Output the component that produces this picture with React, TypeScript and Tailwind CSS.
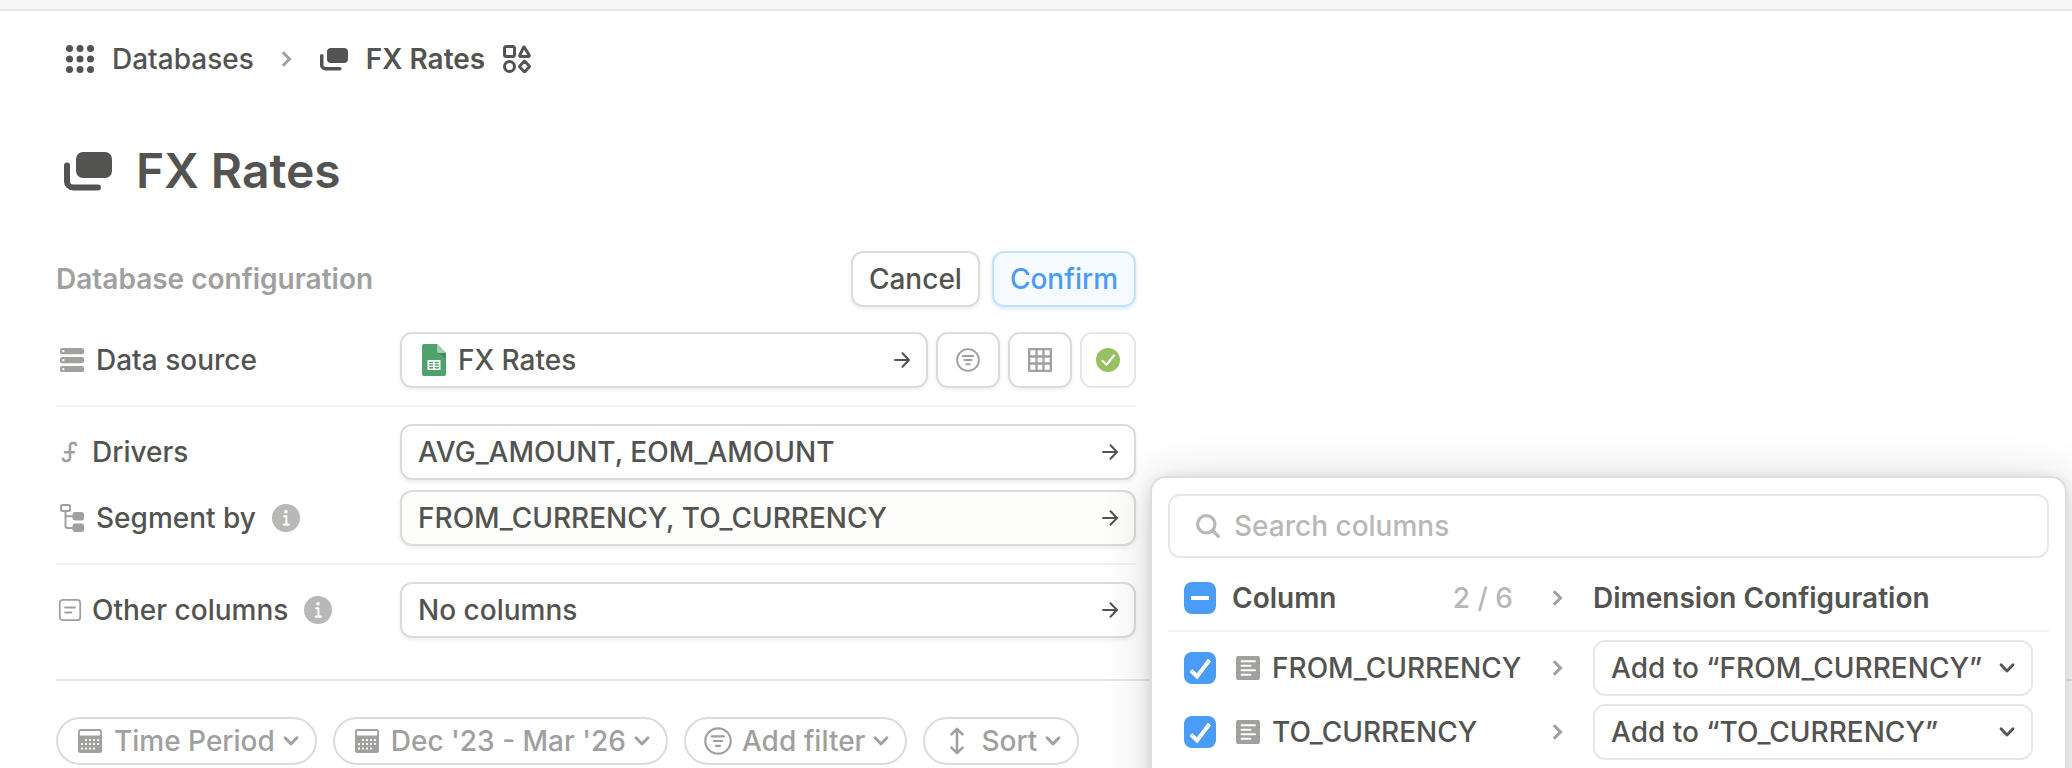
import type { ReactNode } from "react";

const stroke = {
  fill: "none",
  stroke: "currentColor",
  strokeLinecap: "round" as const,
  strokeLinejoin: "round" as const,
};

function DotsIcon() {
  const at = [3.5, 14, 24.5];
  return (
    <svg className="size-7 shrink-0" viewBox="0 0 28 28" fill="currentColor" aria-hidden="true">
      {at.map((y) => at.map((x) => <circle key={`${x}-${y}`} cx={x} cy={y} r="3.5" />))}
    </svg>
  );
}

function DatabaseIcon({ className }: { className: string }) {
  return (
    <svg className={className} viewBox="0 0 48 40" aria-hidden="true">
      <rect x="12" y="1" width="36" height="26" rx="7" fill="currentColor" />
      <path d="M3 14.500V30.500A6 6 0 0 0 9 36.500H34" {...stroke} strokeWidth="6" />
    </svg>
  );
}

function ShapesIcon() {
  return (
    <svg className="size-7 shrink-0" viewBox="0 0 28 28" {...stroke} strokeWidth="3" aria-hidden="true">
      <rect x="1.500" y="1.500" width="10" height="10" rx="2" />
      <path d="M21.300 2.200 26 9.700Q27 11.500 25 11.500H18Q16 11.500 17 9.700L20.700 2.200Q21 1.600 21.300 2.200Z" />
      <circle cx="6.500" cy="21.500" r="5" />
      <path d="M20.700 16.800Q21.500 16 22.300 16.800L26 20.700Q26.800 21.500 26 22.300L22.300 26.200Q21.500 27 20.700 26.200L17 22.300Q16.200 21.500 17 20.700Z" />
    </svg>
  );
}

function ChevronRight() {
  return (
    <svg className="h-4 w-3 shrink-0 text-[#a0a09e]" viewBox="0 0 12 16" {...stroke} strokeWidth="3" strokeLinecap="butt" strokeLinejoin="miter" aria-hidden="true">
      <path d="M1.800 1.300 8.500 8 1.800 14.700" />
    </svg>
  );
}

function ChevronDown() {
  return (
    <svg className="h-3 w-4 shrink-0" viewBox="0 0 16 12" {...stroke} strokeWidth="2.800" aria-hidden="true">
      <path d="M2 2.800 8 9 14 2.800" />
    </svg>
  );
}

function ArrowRight() {
  return (
    <svg className="size-4 shrink-0" viewBox="0 0 16 16" {...stroke} strokeWidth="2" aria-hidden="true">
      <path d="M1 8H15M8.500 1.300 15 8 8.500 14.700" />
    </svg>
  );
}

function ServerIcon() {
  return (
    <svg className="size-6 shrink-0" viewBox="0 0 24 24" aria-hidden="true">
      {[0, 9, 18].map((y) => (
        <g key={y}>
          <rect y={y} width="24" height="6.200" rx="2.200" fill="currentColor" />
          <circle cx="3.300" cy={y + 3.1} r="1.200" fill="#fff" />
        </g>
      ))}
    </svg>
  );
}

function FunctionIcon() {
  return (
    <svg className="h-6 w-5 shrink-0" viewBox="0 0 20 24" {...stroke} strokeWidth="2.600" aria-hidden="true">
      <path d="M16 5C15.500 2.200 10.200 2 10 5.800V17.500C10 21.800 4 22 3 18.800M5 12.200H14" />
    </svg>
  );
}

function TreeIcon() {
  return (
    <svg className="h-7 w-6 shrink-0" viewBox="0 0 24 28" aria-hidden="true">
      <path d="M5.500 8V22A2 2 0 0 0 7.500 24H13M5.500 12.300H13" {...stroke} strokeWidth="2" />
      <rect x="1" y="1" width="9" height="6" rx="1.500" {...stroke} strokeWidth="2" />
      <rect x="12.500" y="8" width="11.500" height="8.500" rx="2.500" fill="currentColor" />
      <rect x="12.500" y="19.500" width="11.500" height="8.500" rx="2.500" fill="currentColor" />
    </svg>
  );
}

function NoteIcon() {
  return (
    <svg className="size-6 shrink-0" viewBox="0 0 24 24" {...stroke} strokeWidth="1.800" aria-hidden="true">
      <rect x="1.800" y="1.800" width="20.400" height="20.400" rx="3" />
      <path d="M7 9.500H17M7 14.500H13.500" />
    </svg>
  );
}

function InfoIcon() {
  return (
    <svg className="size-7 shrink-0" viewBox="0 0 28 28" aria-hidden="true">
      <circle cx="14" cy="14" r="14" fill="#b8b8b6" />
      <circle cx="14" cy="7.700" r="1.800" fill="#fff" />
      <path d="M12 12.300H14.400V20.500M11.800 20.600H17" fill="none" stroke="#fff" strokeWidth="2.100" strokeLinecap="round" strokeLinejoin="round" />
    </svg>
  );
}

function SheetIcon() {
  return (
    <svg className="h-8 w-6 shrink-0" viewBox="0 0 24 32" aria-hidden="true">
      <path d="M2 0H15L24 9V30A2 2 0 0 1 22 32H2A2 2 0 0 1 0 30V2A2 2 0 0 1 2 0Z" fill="#4fa26b" />
      <path d="M15.500 8.500 24 15V9Z" fill="#44895c" />
      <path d="M15 0 24 9H17A2 2 0 0 1 15 7Z" fill="#a3ceb0" />
      <path d="M5.500 16H18.500V26H5.500Z" fill="#fff" />
      <path d="M7.200 18.400H11.200M12.800 18.400H16.800M7.200 21H11.200M12.800 21H16.800M7.200 23.700H11.200M12.800 23.700H16.800" stroke="#4fa26b" strokeWidth="1.500" />
    </svg>
  );
}

function FilterIcon({ className }: { className: string }) {
  return (
    <svg className={className} viewBox="0 0 28 28" {...stroke} strokeWidth="2.200" aria-hidden="true">
      <circle cx="14" cy="14" r="12.700" />
      <path d="M8 9.300H20M9.800 14H18.200M12 18.900H16" />
    </svg>
  );
}

function GridIcon() {
  return (
    <svg className="size-6 shrink-0" viewBox="0 0 24 24" {...stroke} strokeWidth="2.300" aria-hidden="true">
      <path d="M1.200 1.200H22.800V22.800H1.200ZM8.500 1V23M15.500 1V23M1 8.500H23M1 15.500H23" />
    </svg>
  );
}

function CheckCircle() {
  return (
    <svg className="size-6 shrink-0" viewBox="0 0 24 24" aria-hidden="true">
      <circle cx="12" cy="12" r="12" fill="#95c162" />
      <path d="M6.500 12.800 10.500 16.700 18 7.500" fill="none" stroke="#fff" strokeWidth="2.200" strokeLinecap="round" />
    </svg>
  );
}

function CalendarIcon() {
  const dots = [
    [8, 11], [12, 11], [16, 11], [20, 11],
    [4, 15], [8, 15], [12, 15], [16, 15], [20, 15],
    [4, 19.5], [8, 19.5], [12, 19.5], [16, 19.5],
  ];
  return (
    <svg className="size-6 shrink-0" viewBox="0 0 24 24" aria-hidden="true">
      <rect width="24" height="24" rx="2.500" fill="currentColor" />
      <rect x="1.800" y="2" width="20.400" height="4.500" rx="0.800" fill="#fff" />
      {dots.map(([x, y]) => (
        <rect key={`${x}-${y}`} x={x - 1} y={y - 1} width="2" height="2" rx="0.500" fill="#fff" />
      ))}
    </svg>
  );
}

function SortIcon() {
  return (
    <svg className="size-7 shrink-0" viewBox="0 0 28 28" {...stroke} strokeWidth="2.600" aria-hidden="true">
      <path d="M14 2V26M8.500 7.300 14 1.800 19.500 7.300M8.500 20.700 14 26.200 19.500 20.700" />
    </svg>
  );
}

function SearchIcon() {
  return (
    <svg className="size-6 shrink-0 text-[#b8b8b6]" viewBox="0 0 24 24" {...stroke} strokeWidth="3.200" aria-hidden="true">
      <circle cx="10.300" cy="10.300" r="8.700" />
      <path d="M16.800 16.800 22.400 22.400" />
    </svg>
  );
}

function TextColumnIcon() {
  return (
    <svg className="size-6 shrink-0" viewBox="0 0 24 24" aria-hidden="true">
      <rect width="24" height="24" rx="2" fill="#a0a09e" />
      <path d="M5.500 5.200H19M5.500 9.700H14.500M5.500 14.200H19M5.500 18.700H14.500" stroke="#fff" strokeWidth="1.900" strokeLinecap="round" />
    </svg>
  );
}

const fieldBox =
  "flex h-14 items-center rounded-xl border-2 border-[#dcdcda] shadow-[0_2px_4px_rgba(0,0,0,0.07)]";

function Field({ children, label, active }: { children: ReactNode; label: string; active?: boolean }) {
  return (
    <button
      type="button"
      aria-label={label}
      className={`${fieldBox} min-w-0 flex-1 justify-between px-4 text-left ${active ? "bg-[#fdfdfb]" : "bg-white"}`}
    >
      {children}
      <ArrowRight />
    </button>
  );
}

function ConfigRow({ icon, label, info, children }: { icon: ReactNode; label: string; info?: boolean; children: ReactNode }) {
  return (
    <div className="flex items-center">
      <div className="flex w-86 shrink-0 items-center">
        <span className="flex items-center text-[#a0a09e]">{icon}</span>
        <span>{label}</span>
        {info && (
          <button type="button" aria-label={`About ${label}`} className="ml-4">
            <InfoIcon />
          </button>
        )}
      </div>
      <div className="flex min-w-0 flex-1 gap-2">{children}</div>
    </div>
  );
}

function Chip({ icon, label, className }: { icon: ReactNode; label: string; className: string }) {
  return (
    <button type="button" className={`flex h-12 items-center rounded-full border-2 border-[#dcdcda] pr-4 ${className}`}>
      {icon}
      <span className="mr-2">{label}</span>
      <ChevronDown />
    </button>
  );
}

function Checkbox({ label, mixed }: { label: string; mixed?: boolean }) {
  return (
    <span className="grid size-8 shrink-0">
      <input
        type="checkbox"
        defaultChecked
        aria-label={label}
        className="col-start-1 row-start-1 size-8 appearance-none rounded-lg bg-[#4a9cf6]"
      />
      <svg className="pointer-events-none col-start-1 row-start-1 size-8" viewBox="0 0 32 32" fill="none" stroke="#fff" strokeWidth="4" aria-hidden="true">
        <path d={mixed ? "M7 16H25" : "M7 18.500 13 24.500 25.500 8"} />
      </svg>
    </span>
  );
}

function ColumnRow({ name }: { name: string }) {
  return (
    <div className="flex items-center px-4">
      <Checkbox label={name} />
      <div className="ml-5 flex w-79 shrink-0 items-center gap-3">
        <TextColumnIcon />
        <span>{name}</span>
      </div>
      <ChevronRight />
      <div className="ml-[29px] grid min-w-0 flex-1 items-center">
        <select
          aria-label={`Dimension for ${name}`}
          className="col-start-1 row-start-1 h-14 w-full appearance-none rounded-xl border-2 border-[#e7e7e5] bg-white pl-4 pr-12"
        >
          <option>{`Add to “${name}”`}</option>
        </select>
        <span className="pointer-events-none col-start-1 row-start-1 mr-[18px] justify-self-end">
          <ChevronDown />
        </span>
      </div>
    </div>
  );
}

export default function App() {
  return (
    <div className="relative h-screen overflow-hidden bg-white font-['Inter',sans-serif] text-[28px] font-medium leading-8 text-[#535351]">
      <div className="h-[11px] border-b-2 border-[#e8e7e5] bg-[#f7f6f5]" />

      <nav aria-label="Breadcrumb" className="mt-8 flex h-8 items-center px-16">
        <a href="#databases" className="ml-[2px] flex items-center gap-[18px]">
          <DotsIcon />
          <span>Databases</span>
        </a>
        <span className="mx-[27px] flex">
          <ChevronRight />
        </span>
        <a href="#fx-rates" className="flex items-center gap-[18px] font-semibold">
          <DatabaseIcon className="h-6 w-7" />
          <span>FX Rates</span>
        </a>
        <button type="button" aria-label="Shapes" className="ml-[18px]">
          <ShapesIcon />
        </button>
      </nav>

      <header className="mt-16 flex h-16 items-center gap-6 px-16">
        <DatabaseIcon className="h-10 w-12" />
        <h1 className="text-5xl font-semibold">FX Rates</h1>
      </header>

      <section aria-label="Database configuration" className="mx-14 mt-12 max-w-270">
        <div className="flex items-center">
          <h2 className="flex-1 font-semibold text-[#a0a09e]">Database configuration</h2>
          <button type="button" className={`${fieldBox} bg-white px-4`}>
            Cancel
          </button>
          <button
            type="button"
            className="ml-3 flex h-14 items-center rounded-xl border-2 border-[#c3e2fc] bg-[#f6fbff] px-4 text-[#4a9cf6] shadow-[0_2px_4px_rgba(74,156,246,0.2)]"
          >
            Confirm
          </button>
        </div>

        <div className="mt-[25px] border-b-2 border-[#f2f2f1] pb-[17px]">
          <ConfigRow icon={<span className="ml-1 mr-3"><ServerIcon /></span>} label="Data source">
            <Field label="Data source: FX Rates">
              <span className="flex items-center gap-3">
                <span className="ml-1"><SheetIcon /></span>
                FX Rates
              </span>
            </Field>
            <button type="button" aria-label="Filter source" className={`${fieldBox} w-16 justify-center bg-white text-[#a0a09e]`}>
              <FilterIcon className="size-6" />
            </button>
            <button type="button" aria-label="View table" className={`${fieldBox} w-16 justify-center bg-white text-[#a0a09e]`}>
              <GridIcon />
            </button>
            <button type="button" aria-label="Synced" className="flex size-14 items-center justify-center rounded-xl border-2 border-[#e7e7e5]">
              <CheckCircle />
            </button>
          </ConfigRow>
        </div>

        <div className="flex flex-col gap-[10px] border-b-2 border-[#f2f2f1] py-[17px]">
          <ConfigRow icon={<span className="ml-1 mr-3"><FunctionIcon /></span>} label="Drivers">
            <Field label="Drivers: AVG_AMOUNT, EOM_AMOUNT">AVG_AMOUNT, EOM_AMOUNT</Field>
          </ConfigRow>
          <ConfigRow icon={<span className="ml-1 mr-3"><TreeIcon /></span>} label="Segment by" info>
            <Field label="Segment by: FROM_CURRENCY, TO_CURRENCY" active>FROM_CURRENCY, TO_CURRENCY</Field>
          </ConfigRow>
        </div>

        <div className="py-[17px]">
          <ConfigRow icon={<span className="ml-[2px] mr-[10px]"><NoteIcon /></span>} label="Other columns" info>
            <Field label="Other columns: No columns">No columns</Field>
          </ConfigRow>
        </div>
      </section>

      <div className="ml-14 mt-6 flex gap-4 border-t-2 border-[#e8e8e7] pt-9 text-[#a0a09e]">
        <Chip icon={<span className="mr-3"><CalendarIcon /></span>} label="Time Period" className="pl-5" />
        <Chip icon={<span className="mr-3"><CalendarIcon /></span>} label="Dec '23 - Mar '26" className="pl-5" />
        <Chip icon={<span className="mr-[10px]"><FilterIcon className="size-7" /></span>} label="Add filter" className="pl-[18px]" />
        <Chip icon={<span className="mr-[10px]"><SortIcon /></span>} label="Sort" className="pl-[18px]" />
      </div>

      <div
        role="dialog"
        aria-label="Segment columns"
        className="absolute right-[5px] top-[476px] w-[917px] rounded-t-2xl border-2 border-[#dededd] bg-white p-4 pb-16 shadow-[0_4px_48px_rgba(0,0,0,0.16),0_2px_12px_rgba(0,0,0,0.1)]"
      >
        <label className="flex h-16 items-center gap-[14px] rounded-xl border-2 border-[#e7e7e5] px-[26px]">
          <SearchIcon />
          <input
            type="text"
            aria-label="Search columns"
            placeholder="Search columns"
            className="min-w-0 flex-1 bg-transparent outline-none placeholder:text-[#b8b8b6]"
          />
        </label>
        <div className="flex h-[74px] items-center border-b-2 border-[#f2f2f1] px-4 pt-2 font-semibold">
          <Checkbox label="All columns" mixed />
          <div className="ml-4 flex w-80 shrink-0 items-center justify-between pr-[39px]">
            <span>Column</span>
            <span className="font-medium text-[#b8b8b6]">2 / 6</span>
          </div>
          <ChevronRight />
          <span className="ml-[29px]">Dimension Configuration</span>
        </div>
        <div className="mt-2 flex flex-col gap-2">
          <ColumnRow name="FROM_CURRENCY" />
          <ColumnRow name="TO_CURRENCY" />
        </div>
      </div>
    </div>
  );
}
